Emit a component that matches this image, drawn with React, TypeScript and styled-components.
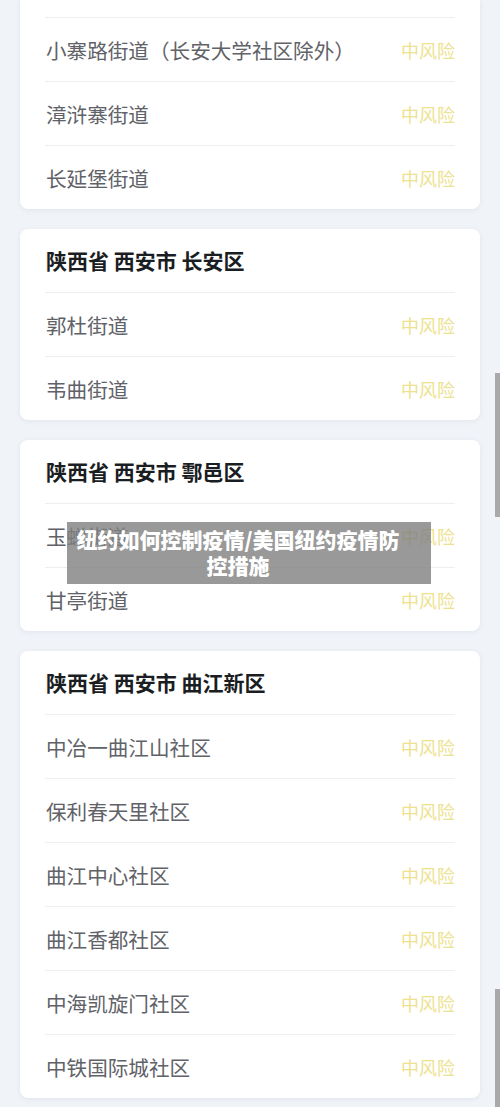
import styled, { createGlobalStyle } from 'styled-components';

const GlobalStyle = createGlobalStyle`
  html, body {
    margin: 0;
    padding: 0;
    background: #f0f3f8;
  }
  body {
    font-family: "Noto Sans CJK SC", "Noto Sans", sans-serif;
    overflow: hidden;
  }
`;

interface Area {
  title?: string;
  streets: string[];
}

const areas: Area[] = [
  { streets: ['小寨路街道（长安大学社区除外）', '漳浒寨街道', '长延堡街道'] },
  { title: '陕西省 西安市 长安区', streets: ['郭杜街道', '韦曲街道'] },
  { title: '陕西省 西安市 鄠邑区', streets: ['玉蝉街道', '甘亭街道'] },
  {
    title: '陕西省 西安市 曲江新区',
    streets: ['中冶一曲江山社区', '保利春天里社区', '曲江中心社区', '曲江香都社区', '中海凯旋门社区', '中铁国际城社区'],
  },
];

const App: React.FC = () => {
  return (
    <Screen>
      <GlobalStyle />
      <List>
        {areas.map((area, i) => (
          <Card key={i} $cut={!area.title}>
            {area.title && <Header>{area.title}</Header>}
            {area.streets.map((s) => (
              <Row key={s}>
                <Street>{s}</Street>
                <Risk>中风险</Risk>
              </Row>
            ))}
          </Card>
        ))}
      </List>
      {/* caption strip laid over the screenshot */}
      <Banner>
        <BannerText>纽约如何控制疫情/美国纽约疫情防控措施</BannerText>
      </Banner>
      <ScrollThumb $top={373} $height={144} />
      <ScrollThumb $top={989} $height={118} />
    </Screen>
  );
};

export default App;

const Screen = styled.div`
  position: relative;
  width: 500px;
  height: 1107px;
  overflow: hidden;
  background: #f0f3f8;
`;

const List = styled.div`
  display: flex;
  flex-direction: column;
  gap: 20px;
  padding: 0 20px;
`;

const Card = styled.div<{ $cut?: boolean }>`
  background: #ffffff;
  border-radius: ${(p) => (p.$cut ? '0 0 8px 8px' : '8px')};
  padding: ${(p) => (p.$cut ? '17px 25px 0' : '0 25px')};
  box-shadow: 0 1px 4px rgba(180, 190, 205, 0.25);
`;

const Header = styled.div`
  height: 63px;
  display: flex;
  align-items: center;
  padding-left: 1px;
  font-size: 21px;
  font-weight: 700;
  color: #1a1d22;
  padding-bottom: 1px;
  box-sizing: border-box;
`;

const Row = styled.div`
  height: 64px;
  box-sizing: border-box;
  border-top: 1px solid #eceef1;
  display: flex;
  align-items: center;
  justify-content: space-between;
`;

const Street = styled.span`
  padding-left: 1px;
  font-size: 20.6px;
  color: #606268;
`;

const Risk = styled.span`
  font-size: 18px;
  color: #ede28e;
`;

const Banner = styled.div`
  position: absolute;
  left: 67px;
  top: 522px;
  width: 364px;
  height: 62px;
  box-sizing: border-box;
  padding: 4px 30px 6px 8px;
  background: rgba(128, 128, 128, 0.8);
`;

const BannerText = styled.div`
  font-size: 21px;
  line-height: 26px;
  font-weight: 900;
  color: #ffffff;
  text-align: center;
`;

const ScrollThumb = styled.div<{ $top: number; $height: number }>`
  position: absolute;
  right: 0;
  top: ${(p) => p.$top}px;
  width: 5px;
  height: ${(p) => p.$height}px;
  background: #a9a9a9;
`;
